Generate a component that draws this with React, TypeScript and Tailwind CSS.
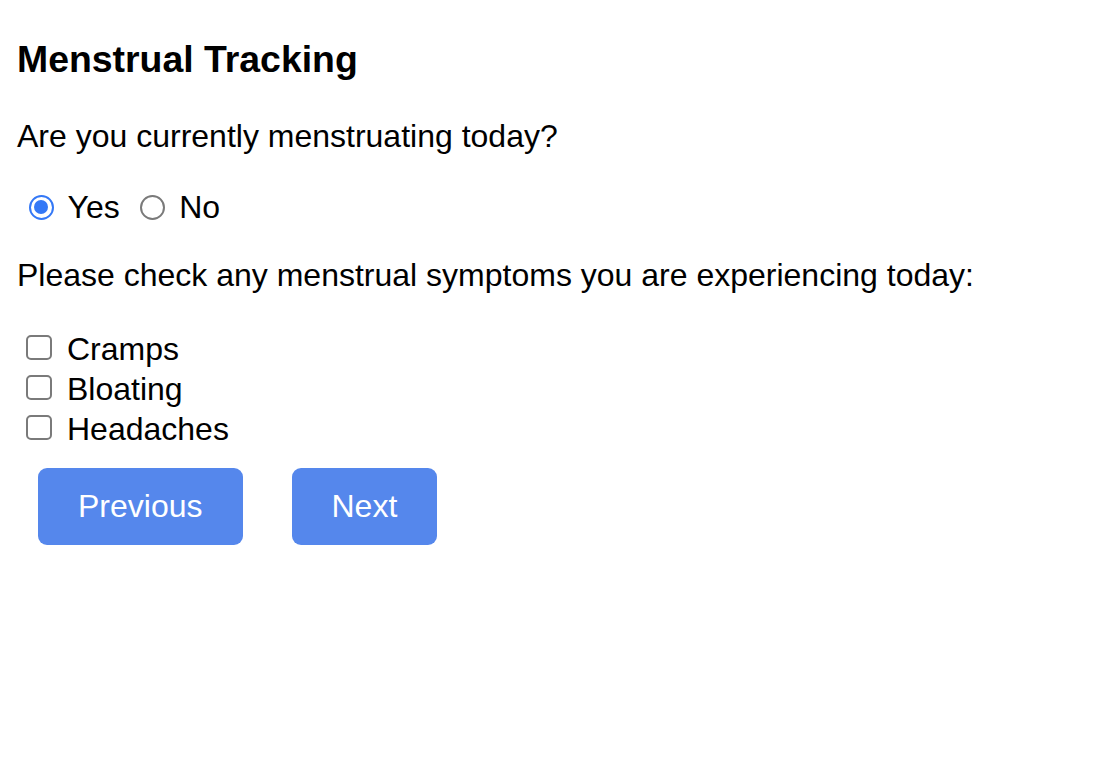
export default function App() {
  return (
    <div
      className="min-h-screen bg-white pl-[17px] pr-4 pt-[37.5px] text-black"
      style={{ fontFamily: '"Liberation Sans", Arial, sans-serif' }}
    >
      <h3 className="text-[37.4px] font-bold leading-[43px]">Menstrual Tracking</h3>

      <p className="mt-[37.4px] text-[32px] leading-[37px]">Are you currently menstruating today?</p>

      {/* Yes / No */}
      <div className="mt-[32px] flex h-[38px] items-start text-[32px] leading-[37px]">
        <span className="ml-[11.5px] mt-[8px] flex h-[25px] w-[25px] items-center justify-center rounded-full border-2 border-[#3478f6] bg-white">
          <span className="h-[14px] w-[14px] rounded-full bg-[#3478f6]" />
        </span>
        <span className="ml-[14px] mt-[2.5px]">Yes</span>
        <span className="ml-[20px] mt-[8px] h-[25px] w-[25px] rounded-full border-2 border-[#7a7a7a] bg-white" />
        <span className="ml-[14.5px] mt-[2.5px]">No</span>
      </div>

      <p className="mt-[32px] text-[32px] leading-[37px]">
        Please check any menstrual symptoms you are experiencing today:
      </p>

      {/* Symptoms */}
      <div className="mt-[34px] flex flex-col text-[32px] leading-[37px]">
        {["Cramps", "Bloating", "Headaches"].map((s) => (
          <div key={s} className="flex h-[40px] items-start">
            <span className="ml-[9px] mt-[7.5px] h-[25px] w-[26px] rounded-[5px] border-2 border-[#7a7a7a] bg-white" />
            <span className="ml-[15px] mt-[3px]">{s}</span>
          </div>
        ))}
      </div>

      <div className="mt-[20.5px] flex">
        <button className="ml-[21px] rounded-[9px] bg-[#5587ec] px-[40px] py-[20px] text-[32px] leading-[37px] text-white">
          Previous
        </button>
        <button className="ml-[49px] rounded-[9px] bg-[#5587ec] px-[40px] py-[20px] text-[32px] leading-[37px] text-white">
          Next
        </button>
      </div>
    </div>
  )
}
